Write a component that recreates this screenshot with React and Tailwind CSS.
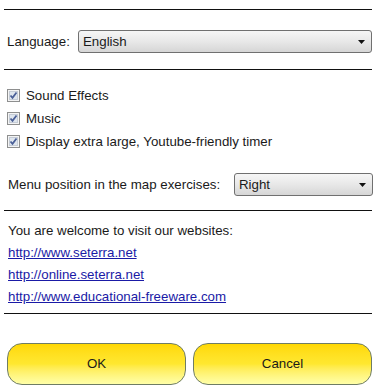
const Rule = () => <div className="ml-[4px] h-px w-[368px] bg-[#111]" />

function Select({ value, className }) {
  return (
    <div
      className={`flex h-[23px] items-center justify-between rounded-[3px] border border-[#707070] bg-gradient-to-b from-[#f6f6f6] via-[#e8e8e8] to-[#d6d6d6] pl-[4px] pr-[6px] ${className}`}
    >
      <span>{value}</span>
      <svg width="7" height="4" viewBox="0 0 7 4">
        <path d="M0 0H7L3.5 4Z" fill="#111" />
      </svg>
    </div>
  )
}

function Check({ label }) {
  return (
    <div className="flex h-[23px] items-center pl-[7px]">
      <svg width="13" height="13" viewBox="0 0 13 13" className="mr-[6px]">
        <rect x="0.5" y="0.5" width="12" height="12" fill="#f4f4f4" stroke="#8e8f8f" />
        <rect x="2.5" y="2.5" width="8" height="8" fill="#dfe6ee" stroke="#c5ccd6" />
        <path d="M3.5 6.5L5.5 8.8L9.5 3.5" fill="none" stroke="#4a5f97" strokeWidth="1.8" />
      </svg>
      <span>{label}</span>
    </div>
  )
}

export default function App() {
  const links = [
    'http://www.seterra.net',
    'http://online.seterra.net',
    'http://www.educational-freeware.com',
  ]

  return (
    <div className="h-[392px] w-[377px] overflow-hidden bg-white font-['Liberation_Sans',Arial,sans-serif] text-[13.3px] leading-none text-[#1a1a1a]">
      <div className="h-[9px]" />
      <Rule />

      <div className="mt-[20px] flex h-[23px] items-center">
        <span className="ml-[7px] w-[71px]">Language:</span>
        <Select value="English" className="w-[294px]" />
      </div>

      <div className="h-[16px]" />
      <Rule />

      <div className="mt-[14px]">
        <Check label="Sound Effects" />
        <Check label="Music" />
        <Check label="Display extra large, Youtube-friendly timer" />
      </div>

      <div className="mt-[20px] flex h-[23px] items-center">
        <span className="ml-[8px] w-[226px]">Menu position in the map exercises:</span>
        <Select value="Right" className="w-[139px]" />
      </div>

      <div className="h-[14px]" />
      <Rule />

      <div className="mt-[9px] pl-[8px]">
        <div className="flex h-[22px] items-center">You are welcome to visit our websites:</div>
        {links.map((l) => (
          <div key={l} className="flex h-[22px] items-center">
            <a href={l} className="text-[#1a1aa6] underline">
              {l}
            </a>
          </div>
        ))}
      </div>

      <div className="h-[5px]" />
      <Rule />

      <div className="mt-[29px] flex gap-[7px] pl-[7px] pr-[5px]">
        {['OK', 'Cancel'].map((b) => (
          <button
            key={b}
            className="flex h-[42px] flex-1 items-center justify-center rounded-[15px] border border-[#6f7d64] bg-gradient-to-b from-[#ffd800] via-[#ffe830] to-[#ffffa8] text-[13.3px] text-[#1a1a1a]"
          >
            {b}
          </button>
        ))}
      </div>
    </div>
  )
}
